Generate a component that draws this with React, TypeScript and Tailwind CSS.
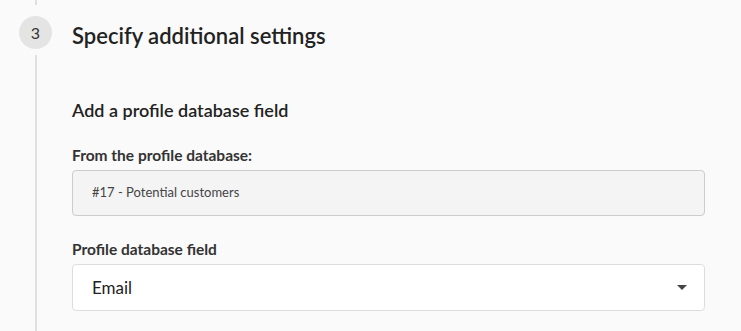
import * as React from 'react';

export default function App() {
  return (
    <div className="flex min-h-screen w-full bg-[#fafafa] text-[#222] font-['Lato','Noto_Sans',sans-serif]">
      {/* Step rail */}
      <div className="flex w-[72px] shrink-0 flex-col items-start pl-[19px]">
        <div className="ml-[16px] h-[5px] w-[2px] bg-[#e0e0e0]" />
        <div className="mt-[11px] flex h-[33px] w-[33px] items-center justify-center rounded-full bg-[#e4e4e4] text-[16px] text-[#333]">
          3
        </div>
        <div className="ml-[16px] mt-[6px] w-[2px] flex-1 bg-[#e0e0e0]" />
      </div>

      {/* Step content */}
      <div className="flex w-[633px] flex-col pt-[22px]">
        <h2 className="text-[22px] font-semibold leading-[28px] text-[#222]">Specify additional settings</h2>

        <h3 className="mt-[48px] text-[18px] font-semibold leading-[24px] text-[#222]">Add a profile database field</h3>

        <label className="mt-[23px] text-[15.5px] font-bold leading-[20px] text-[#333]">From the profile database:</label>
        <div className="mt-[5px] flex h-[46px] items-center rounded-[4px] border border-[#cccccc] bg-[#f4f4f4] px-[19px] text-[13px] text-[#444]">
          #17 - Potential customers
        </div>

        <label className="mt-[23px] text-[15.5px] font-bold leading-[20px] text-[#333]">Profile database field</label>
        <div className="mt-[5px] flex h-[47px] items-center justify-between rounded-[4px] border border-[#dddddd] bg-white pl-[19px] pr-[17px] text-[17px] text-[#222]">
          <span>Email</span>
          <svg width="10" height="5" viewBox="0 0 10 5">
            <path d="M0 0 L10 0 L5 5 Z" fill="#444" />
          </svg>
        </div>
      </div>
    </div>
  );
}
